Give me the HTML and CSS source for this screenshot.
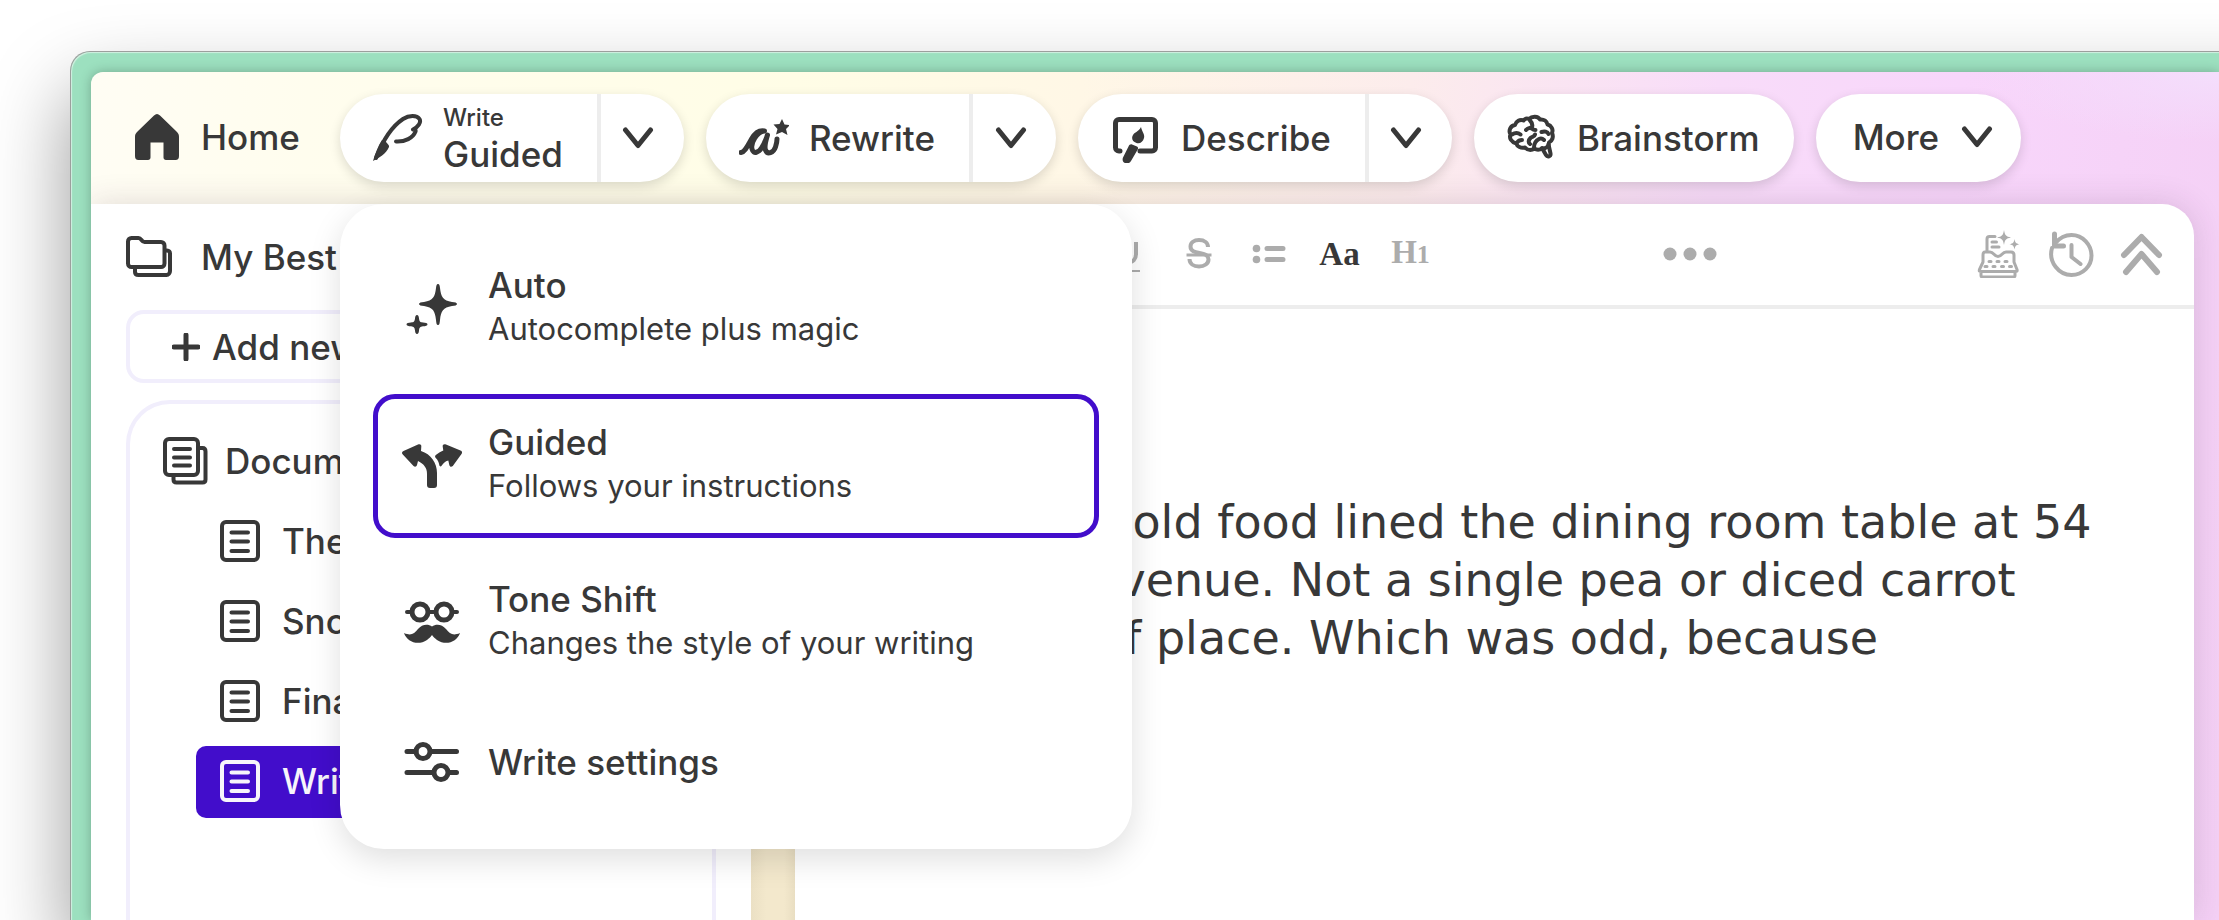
FILE: index.html
```html
<!DOCTYPE html>
<html lang="en">
<head>
<meta charset="utf-8">
<title>Writing workspace</title>
<link rel="stylesheet" href="styles.css">
</head>
<body>
<svg class="sprite" aria-hidden="true">
  <symbol id="chevron" viewBox="0 0 32 24"><path d="M3.500 4 16 19.500 28.500 4" class="line-5"/></symbol>
  <symbol id="page" viewBox="0 0 40 42"><rect x="2" y="2" width="36" height="38" rx="4" class="line-4"/><path d="M11.500 12.500h16.500M11.500 21.500h16.500M11.500 31h16.500" class="line-4"/></symbol>
</svg>

<div class="window">
  <div class="app">
    <header class="topbar">
      <a class="home" href="#">
        <svg class="home-icon" viewBox="0 0 44 46"><path d="M22 0c1 0 2 .5 3 1.500L42 18c1.500 1.500 2 3 2 5v19c0 2.500-1 4-3.500 4H31c-1.500 0-2.500-1-2.500-2.500V24h-13v19.500c0 1.500-1 2.500-2.500 2.500H3.500C1 46 0 44.500 0 42V23c0-2 .5-3.500 2-5L19 1.500C20 .5 21 0 22 0z" fill="currentColor"/><path d="M15 22h14v6.500H15z" fill="currentColor"/></svg>
        <span>Home</span>
      </a>

      <div class="pill">
        <button class="pill-main" type="button">
          <svg class="tool-icon" viewBox="0 0 50 50">
            <path d="M3 45C10 27 18 14 30 6c6-4 14-4 16.500 0C48.500 9.500 45 14 40 16.500c2 .2 3 .5 2.500 2C40 25 32 29 23 28.500" class="line-4"/>
            <path d="M0 48c2-7 5-15 9-21h3c0 2 5 5 4 7C13 41 6 45 0 48z" fill="currentColor"/>
          </svg>
          <span class="stack"><small>Write</small><span>Guided</span></span>
        </button>
        <button class="pill-arrow" type="button" aria-label="Write options"><svg class="chevron"><use href="#chevron"/></svg></button>

        <div class="menu" role="menu">
          <button class="menu-item" type="button" role="menuitem">
            <svg class="menu-icon" viewBox="0 0 60 60"><path d="M36 5c1.500 0 1.800 2 2 4 1 9 3 12.500 12 14 3 .4 5 .6 5 2s-2 1.700-5 2.100c-9 1.400-11 5-12 13.900-.3 3-.5 5-2 5s-1.700-2-2-5c-1-9-3-12.500-12-13.900-3-.4-5-.7-5-2.100s2-1.600 5-2c9-1.500 11-5 12-14 .3-2 .5-4 2-4zM15 36c1.300 0 1.800 1.500 2 3.500.4 3 1 3.700 4 4 2.500.3 4.500.6 4.500 1.900s-2 1.600-4.500 1.900c-3 .4-3.600 1.200-4 4.200-.2 2-.7 3.500-2 3.500s-1.800-1.500-2-3.500c-.4-3-1-3.800-4-4.200-2.500-.3-4.500-.6-4.500-1.900s2-1.600 4.500-1.900c3-.3 3.600-1 4-4 .2-2 .7-3.500 2-3.500z" fill="currentColor"/></svg>
            <span class="menu-text"><span class="menu-title">Auto</span><span class="menu-note">Autocomplete plus magic</span></span>
          </button>
          <button class="menu-item selected" type="button" role="menuitem">
            <svg class="menu-icon" viewBox="0 0 60 60"><path d="M1.500 15 16 8.500c2-.8 3.500 0 3.300 2L19 15c10 3 16 12 16 22v12c0 2-1 3-3 3h-4c-2 0-3-1-3-3V38c0-6-3-10-9-13l-1 4c-.6 1.800-2 2.200-3.500 1L.8 18.500C-.5 17-.2 15.800 1.500 15zM58.500 14.500 44 8.500c-2-.8-3.500 0-3.300 2l.6 4c-3 1-5 3-7.500 4.500-1 1-1 2 0 3 2 2 3 4 3.500 7 .4 1.800 1.500 1.800 2.500.5 2-2.500 3-4 6.500-5l1 4.500c.6 2 2 2.400 3.500 1l8.700-12c1-1.500.7-2.800-1-3.500z" fill="currentColor"/></svg>
            <span class="menu-text"><span class="menu-title">Guided</span><span class="menu-note">Follows your instructions</span></span>
          </button>
          <button class="menu-item" type="button" role="menuitem">
            <svg class="menu-icon" viewBox="0 0 60 60"><circle cx="18" cy="19" r="8" class="line-5"/><circle cx="42" cy="19" r="8" class="line-5"/><path d="M5 19h5M26 19h8M50 19h5" class="line-4"/><path d="M30 33.500c4-3 10-2.500 14 2.500 4 5 7 7 14 4-3 9-14 13-23 7-2-1.500-3.500-3-5-5-1.500 2-3 3.500-5 5-9 6-20 2-23-7 7 3 10 1 14-4 4-5 10-5.500 14-2.500z" fill="currentColor"/></svg>
            <span class="menu-text"><span class="menu-title">Tone Shift</span><span class="menu-note">Changes the style of your writing</span></span>
          </button>
          <button class="menu-item short" type="button" role="menuitem">
            <svg class="menu-icon" viewBox="0 0 60 60"><path d="M5 19.500h9M29 19.500h25.500M5 40.500h26M47 40.500h7.500" class="line-5"/><circle cx="21" cy="19.500" r="7" class="line-5"/><circle cx="39" cy="40.500" r="7" class="line-5"/></svg>
            <span class="menu-title">Write settings</span>
          </button>
        </div>
      </div>

      <div class="pill">
        <button class="pill-main" type="button">
          <svg class="tool-icon" viewBox="0 0 50 50">
            <path d="M2 39.500C6 39 9 32 12.500 26c3.500-6 8-9 13-8-8 1-14 12-12.500 18 1.500 6 7 3 9.500-1 3-4 4.500-9 6-13-1.500 5-3.500 11-2 15 2 5 8 3 10-3 1-3 1.500-6 1.500-8" class="line-5"/>
            <path d="m43 6 2.500 5.500 5.500.5-4 4 1.500 6-5.500-3-6 2.500 1.500-5.500-4-4.500 6-.5z" fill="currentColor"/>
          </svg>
          <span>Rewrite</span>
        </button>
        <button class="pill-arrow" type="button" aria-label="Rewrite options"><svg class="chevron"><use href="#chevron"/></svg></button>
      </div>

      <div class="pill">
        <button class="pill-main" type="button">
          <svg class="tool-icon" viewBox="0 0 50 50">
            <path d="M9 38H8c-2 0-3.500-1.500-3.500-3.500V10c0-2 1.500-3.500 3.500-3.500h33c2 0 3.500 1.500 3.500 3.500v24.500c0 2-1.500 3.500-3.500 3.500H29" class="line-5"/>
            <path d="M30 14c1 5 4 7 3 11-1 4-4 6-7.500 5-4-1-5-4-4-7 1.500-4 6-4 8.500-9zM21 31.500l5 2c1 .5 1.300 1.500 1 2.500l-7 12c-1.500 2.500-4 3-6 2s-3-3-2-5.500l5.500-11c.8-1.700 2-2.500 3.500-2z" fill="currentColor"/>
          </svg>
          <span>Describe</span>
        </button>
        <button class="pill-arrow" type="button" aria-label="Describe options"><svg class="chevron"><use href="#chevron"/></svg></button>
      </div>

      <button class="pill pill-main" type="button">
        <svg class="tool-icon" viewBox="0 0 50 50">
          <path d="M22 6c3-3 9-3 11 .5 4-.5 7 2 7.500 5 4 1 6 5 4.500 8.500 2 4 0 8-3 9.500 0 4-3 6-6.500 6-3 1.500-6 1.500-8 0-3 2-7 2-9.500-1-4 1-8-1-8.500-4C4 29 2 25 3.500 21.500 1 17 4 12.500 8 12c1-4 5-6 8.500-4.500C18 5.500 20 5 22 6z" class="line-4"/>
          <path d="M23 7.500c2 2 3 5 1.500 8M24.500 15c1 1.500 2 2 4 2M24.500 14.500c-2 .5-4 .5-5.500 2.500M5 21.500c3-2 6-2 8.500 0M10 29.500c1-1.500 2.500-2.500 5-2.500M34.500 19c3-1 6-.5 7 2M27 34.500c0-5 2-7 5-8.500 2-1 3.500-.5 5 1M23 31c-2-1.500-1.500-4 .5-6 1.500-1.500 4-1 4.500-3.500M35 35l4 7c1.500 2.500 5 1.500 4.500-1.500l-2-9" class="line-4"/>
        </svg>
        <span>Brainstorm</span>
      </button>

      <button class="pill more" type="button"><span>More</span><svg class="chevron"><use href="#chevron"/></svg></button>
    </header>

    <div class="sheet">
      <nav class="sidebar">
        <div class="project">
          <svg class="side-icon" viewBox="0 0 46 42"><path d="M2 5.500C2 3.500 3.500 2 5.500 2h7c3 0 3 4 6 4H35c2 0 3.500 1.500 3.500 3.500v18c0 2-1.500 3.500-3.500 3.500H5.500C3.500 31 2 29.500 2 27.500zM39 14.500h2c2 0 3 1.500 3 3V35c0 2-1.500 4-3.500 4h-28C10.500 39 9 38 9 36v-4" class="line-4"/></svg>
          <span>My Best</span>
        </div>
        <button class="add" type="button">
          <svg class="plus" viewBox="0 0 28 28"><path d="M14 2v24M2 14h24" class="line-5"/></svg>
          <span>Add new</span>
        </button>
        <section class="tree">
          <div class="tree-head">
            <svg class="docs-icon" viewBox="0 0 46 48"><rect x="3" y="2" width="33" height="36" rx="4" class="line-4"/><path d="M12 12h16M12 20.500h16M12 28.500h16M36 11h4.500c2 0 3 1.500 3 3.500v28c0 2-1 3-3 3h-26c-2 0-3-1-3-3V39" class="line-4"/></svg>
            <span>Documents</span>
          </div>
          <a class="doc" href="#"><svg class="page-icon"><use href="#page"/></svg><span>The</span></a>
          <a class="doc" href="#"><svg class="page-icon"><use href="#page"/></svg><span>Snow</span></a>
          <a class="doc" href="#"><svg class="page-icon"><use href="#page"/></svg><span>Final</span></a>
          <a class="doc current" href="#"><svg class="page-icon"><use href="#page"/></svg><span>Write</span></a>
        </section>
      </nav>

      <div class="spine"></div>

      <main class="editor">
        <div class="toolbar">
          <div class="tools formats">
            <button type="button" aria-label="Underline"><svg class="glyph" viewBox="0 0 32 40"><path d="M8 8v12c0 5 3 8.500 8.500 8.500S25 25 25 20V8" class="line-4 butt"/><path d="M5 37h24" class="line-2 butt"/></svg></button>
            <button type="button" aria-label="Strikethrough"><svg class="glyph" viewBox="0 0 32 40"><path d="M26 13c0-4-3.500-7-9-7-5 0-8.500 2.500-8.500 6.500C8.500 22 26.500 16 26.500 25.500c0 4-4 7-9.500 7s-9.500-3-9.500-7.500" class="line-4 butt"/><path d="M4.500 21h25" class="line-3 butt"/></svg></button>
            <button type="button" aria-label="List"><svg class="glyph" viewBox="0 0 32 40"><circle cx="3.500" cy="14.500" r="3.800" fill="currentColor"/><circle cx="3.500" cy="25.500" r="3.800" fill="currentColor"/><path d="M14 14.500h16M14 25.500h16" class="line-5"/></svg></button>
            <button type="button" class="serif active">Aa</button>
            <button type="button" class="serif"><span>H<small>1</small></span></button>
          </div>
          <div class="tools overflow">
            <button type="button" aria-label="More tools"><svg class="dots" viewBox="0 0 54 14"><circle cx="7" cy="7" r="6.500"/><circle cx="27" cy="7" r="6.500"/><circle cx="47" cy="7" r="6.500"/></svg></button>
          </div>
          <div class="tools actions">
            <button type="button" aria-label="Typewriter"><svg class="action-icon" viewBox="0 0 48 48"><path d="M12 21V9c0-1.500 1-2.500 2.500-2.500H20M17 12h4.500M17 17h7M10 22h5c4 0 4 4.500 8 4.500s4-4.500 8-4.500h5c2 0 3 1 3 3v7l3 7.500c.5 1.500 0 2-1.500 2h-34C4 41.500 4 41 4.500 39.500L8 32v-7c0-2 .5-3 2-3zM6 42v3.500c0 1 .5 1.500 1.500 1.500h31c1 0 1.500-.5 1.500-1.500V42" class="line-3"/><path d="M14 31.500h2M22 31.500h2M30 31.500h2M10 36.500h2M18 36.500h2M26.500 36.500h2M34.500 36.500h2" class="line-3"/><path d="M29 0c.9 5.200 1.800 6.500 7 7.500-5.200 1-6.100 2.300-7 7.500-.9-5.200-1.800-6.500-7-7.500 5.200-1 6.100-2.300 7-7.500zM39.500 9c.7 3.700 1.300 4.500 5 5.200-3.700.8-4.300 1.600-5 5.300-.7-3.700-1.300-4.500-5-5.300 3.700-.7 4.300-1.500 5-5.200z" fill="currentColor"/></svg></button>
            <button type="button" aria-label="History"><svg class="action-icon" viewBox="0 0 48 48"><path d="M6 18c-4 14 7 27 19.500 27 11.500 0 20-9 20-19.500S37 5 25.500 5C19 5 13.500 8 9.500 13" class="line-4"/><path d="M8.500 4v12h9" class="line-5"/><path d="M25.500 15v12l9 7" class="line-4"/></svg></button>
            <button type="button" aria-label="Collapse"><svg class="action-icon" viewBox="0 0 48 48"><path d="M7 25 24.500 7 42 25M9 42l15.500-18L40 42" class="line-6"/></svg></button>
          </div>
        </div>
        <p class="prose">The cold food lined the dining room table at 54<br>Ivy Avenue. Not a single pea or diced carrot<br>out of place. Which was odd, because</p>
      </main>
    </div>
  </div>
</div>
</body>
</html>
```

FILE: styles.css
```css
:root {
  --ink: #383838;
  --muted: #acacac;
  --violet: #420dcb;
  --lavender: #f1eefc;
  --line: #ededed;
}

* { box-sizing: border-box; }

body {
  margin: 0;
  padding: 51px 0 0 70px;
  min-height: 100vh;
  display: flex;
  overflow: hidden;
  background: #fff;
  color: var(--ink);
  font: 500 35px/44px Inter, "Liberation Sans", sans-serif;
}

button {
  margin: 0;
  padding: 0;
  border: 0;
  background: none;
  color: inherit;
  font: inherit;
  text-align: left;
  white-space: nowrap;
}

a { color: inherit; text-decoration: none; }
svg { display: block; flex: none; }
.sprite { position: absolute; width: 0; height: 0; }

.line-2, .line-3, .line-4, .line-5, .line-6 {
  fill: none;
  stroke: currentColor;
  stroke-linecap: round;
  stroke-linejoin: round;
}
.line-2 { stroke-width: 2; }
.line-3 { stroke-width: 3; }
.line-4 { stroke-width: 4; }
.line-5 { stroke-width: 5; }
.line-6 { stroke-width: 6; }
.butt { stroke-linecap: butt; }

/* Window frame; it runs past the right edge so that its shadow stays even */
.window {
  flex: 1;
  display: flex;
  min-width: 0;
  margin-right: -100px;
  padding: 20px 100px 0 20px;
  border: solid #9c9f9d;
  border-width: 1px 0 0 1px;
  border-radius: 20px 0 0 0;
  background: #9ce0bf;
  box-shadow: 0 40px 80px rgba(0, 0, 0, .4), inset 1px 1px 1px #d2f0e1;
}

.app {
  flex: 1;
  display: flex;
  flex-direction: column;
  min-width: 0;
  padding-right: 25px;
  border-radius: 12px 0 0 0;
  background:
    radial-gradient(ellipse 240px 70px at 100% 0, #f4defc, transparent),
    linear-gradient(95deg, #fffdf4 0, #fffdee 10%, #fffde6 32%, #fff7e6 45%, #fcecec 60%, #f8dcf9 74%, #f8d6fb 85%, #f4d0f5 100%);
  box-shadow: 0 0 12px rgba(0, 0, 0, .25);
}

/* Top bar */
.topbar {
  position: relative;
  z-index: 2;
  display: flex;
  align-items: center;
  gap: 22px;
  height: 132px;
  padding-left: 44px;
}

.home {
  display: flex;
  align-items: center;
  gap: 22px;
  width: 183px;
  padding-bottom: 2px;
}
.home-icon { width: 44px; height: 46px; }

.pill {
  position: relative;
  display: flex;
  height: 88px;
  border-radius: 44px;
  background: #fff;
  box-shadow: 0 4px 12px rgba(0, 0, 0, .14);
}

.pill-main {
  display: flex;
  align-items: center;
  gap: 20px;
  padding: 0 34px 0 33px;
}
.tool-icon { width: 50px; height: 50px; }

.stack { display: flex; flex-direction: column; padding-top: 3px; }
.stack small { font-size: 24px; line-height: 28px; }

.pill-arrow {
  display: flex;
  align-items: center;
  justify-content: center;
  width: 87px;
  border-left: 4px solid var(--line);
  padding-right: 8px;
}
.chevron { width: 32px; height: 24px; }

.more {
  align-items: center;
  gap: 22px;
  padding: 0 28px 2px 37px;
}

/* Drop-down menu */
.menu {
  position: absolute;
  top: 110px;
  left: 0;
  display: flex;
  flex-direction: column;
  gap: 13px;
  width: 792px;
  padding: 33px;
  border-radius: 44px;
  background: #fff;
  box-shadow: 0 10px 32px rgba(0, 0, 0, .13);
}

.menu-item {
  display: flex;
  align-items: center;
  gap: 26px;
  height: 144px;
  padding: 0 24px;
  border: 5px solid transparent;
  border-radius: 22px;
}
.menu-item.short { height: 108px; }
.menu-item.selected { border-color: var(--violet); }
.menu-icon { width: 60px; height: 60px; }
.menu-text { display: flex; flex-direction: column; padding-bottom: 5px; }
.menu-note { font-size: 31px; font-weight: 400; }

/* Sheet below the top bar */
.sheet {
  flex: 1;
  display: flex;
  border-radius: 0 32px 0 0;
  background: #fff;
  box-shadow: 0 0 32px rgba(60, 30, 60, .16);
  clip-path: inset(-40px -40px 0 0);
}

.sidebar {
  display: flex;
  flex-direction: column;
  width: 660px;
  padding: 0 35px;
}

.project {
  display: flex;
  align-items: center;
  gap: 29px;
  height: 106px;
}
.side-icon { width: 46px; height: 42px; }

.add {
  display: flex;
  align-items: center;
  gap: 12px;
  height: 73px;
  margin-bottom: 17px;
  padding: 0 42px;
  border: 4px solid var(--lavender);
  border-radius: 18px;
}
.plus { width: 28px; height: 28px; }

.tree {
  flex: 1;
  display: flex;
  flex-direction: column;
  gap: 8px;
  padding: 20px 32px 0;
  border: solid var(--lavender);
  border-width: 4px 4px 0;
  border-radius: 44px 44px 0 0;
}
.tree-head {
  display: flex;
  align-items: center;
  gap: 17px;
  height: 74px;
}
.docs-icon { width: 46px; height: 48px; }

.doc {
  display: flex;
  align-items: center;
  gap: 22px;
  height: 72px;
  margin-left: 34px;
  padding: 0 0 2px 24px;
  border-radius: 10px;
}
.doc.current { background: var(--violet); color: #f7f5fb; }
.page-icon { width: 40px; height: 42px; }

.spine {
  width: 44px;
  background: linear-gradient(90deg, #ebe0c4, #f3e8cc 35%, #f3e8cc 75%, #e9dec2);
}

/* Editor */
.editor { flex: 1; min-width: 0; }

.toolbar {
  display: flex;
  align-items: center;
  height: 105px;
  padding: 0 18px 2px 296px;
  border-bottom: 4px solid var(--line);
  color: var(--muted);
}
.tools { display: flex; align-items: center; }
.tools button {
  display: flex;
  align-items: center;
  justify-content: center;
  width: 71px;
  height: 71px;
}
.glyph { width: 32px; height: 40px; overflow: visible; }
.tools .serif { font: 700 33px/40px "Liberation Serif", serif; }
.serif small { font-size: 26px; }
.active { color: var(--ink); }
.overflow { margin-left: 208px; }
.dots { width: 54px; height: 14px; fill: currentColor; }
.actions { margin-left: auto; }
.action-icon { width: 48px; height: 48px; }

.prose {
  margin: 0;
  padding: 184px 40px 0 212px;
  font: 400 46px/58px "DejaVu Sans", sans-serif;
  white-space: nowrap;
}
```
